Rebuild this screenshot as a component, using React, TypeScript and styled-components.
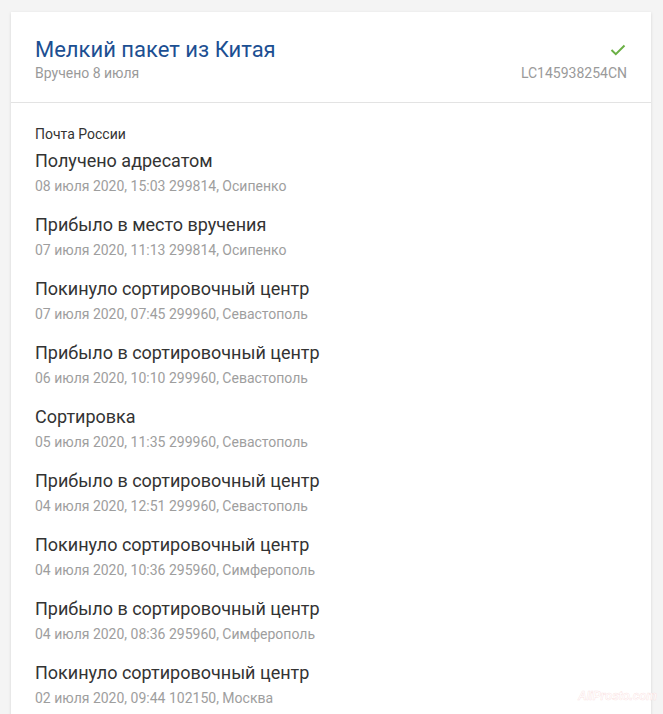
import React from "react";
import styled, { createGlobalStyle } from "styled-components";

const Global = createGlobalStyle`
  html, body { margin: 0; padding: 0; background: #f4f4f4; }
  body { font-family: Roboto, "Noto Sans", Arial, sans-serif; overflow: hidden; }
`;

const Page = styled.div`
  padding: 12px 12px 0 11px;
`;

const Card = styled.div`
  width: 640px;
  min-height: 720px;
  background: #fff;
  box-shadow: 0 1px 3px rgba(0, 0, 0, 0.13);
  position: relative;
`;

const Header = styled.div`
  display: flex;
  justify-content: space-between;
  padding: 24px 24px 20px 24px;
  border-bottom: 1px solid #e3e3e3;
`;

const HeadLeft = styled.div`
  display: flex;
  flex-direction: column;
`;

const HeadRight = styled.div`
  display: flex;
  flex-direction: column;
  align-items: flex-end;
`;

const Title = styled.div`
  font-size: 22px;
  line-height: 28px;
  color: #1c4f92;
`;

const Sub = styled.div`
  font-size: 14px;
  line-height: 18px;
  color: #9a9a9a;
`;

const IconBox = styled.div`
  height: 28px;
  display: flex;
  align-items: center;
  padding-right: 1px;
`;

const Body = styled.div`
  padding: 22px 24px 0 24px;
`;

const Carrier = styled.div`
  font-size: 14px;
  line-height: 18px;
  color: #333;
  margin-bottom: 6px;
`;

const Event = styled.div`
  display: flex;
  flex-direction: column;
  gap: 4px;
  margin-bottom: 18px;
`;

const EventTitle = styled.div`
  font-size: 18px;
  line-height: 24px;
  color: #333;
`;

const EventMeta = styled.div`
  font-size: 14px;
  line-height: 18px;
  color: #9e9e9e;
`;

const Watermark = styled.div`
  position: absolute;
  left: 567px;
  top: 677px;
  font-family: "Liberation Sans", Arial, sans-serif;
  font-style: italic;
  font-weight: bold;
  font-size: 12px;
  line-height: 14px;
  color: rgba(255, 255, 255, 0.9);
  -webkit-text-stroke: 0.5px rgba(240, 170, 170, 0.35);
  letter-spacing: -0.2px;
`;

const events = [
  ["Получено адресатом", "08 июля 2020, 15:03 299814, Осипенко"],
  ["Прибыло в место вручения", "07 июля 2020, 11:13 299814, Осипенко"],
  ["Покинуло сортировочный центр", "07 июля 2020, 07:45 299960, Севастополь"],
  ["Прибыло в сортировочный центр", "06 июля 2020, 10:10 299960, Севастополь"],
  ["Сортировка", "05 июля 2020, 11:35 299960, Севастополь"],
  ["Прибыло в сортировочный центр", "04 июля 2020, 12:51 299960, Севастополь"],
  ["Покинуло сортировочный центр", "04 июля 2020, 10:36 295960, Симферополь"],
  ["Прибыло в сортировочный центр", "04 июля 2020, 08:36 295960, Симферополь"],
  ["Покинуло сортировочный центр", "02 июля 2020, 09:44 102150, Москва"],
];

export default function App() {
  return (
    <>
      <Global />
      <Page>
        <Card>
          <Header>
            <HeadLeft>
              <Title>Мелкий пакет из Китая</Title>
              <Sub>Вручено 8 июля</Sub>
            </HeadLeft>
            <HeadRight>
              <IconBox>
                <svg width="16" height="12" viewBox="0 0 16 12">
                  <path d="M1.5 6 L5.8 10.2 L14.5 1.5" fill="none" stroke="#6aaf44" strokeWidth="2" />
                </svg>
              </IconBox>
              <Sub>LC145938254CN</Sub>
            </HeadRight>
          </Header>
          <Body>
            <Carrier>Почта России</Carrier>
            {events.map(([t, m], i) => (
              <Event key={i}>
                <EventTitle>{t}</EventTitle>
                <EventMeta>{m}</EventMeta>
              </Event>
            ))}
          </Body>
          <Watermark>AliProsto.com</Watermark>
        </Card>
      </Page>
    </>
  );
}
